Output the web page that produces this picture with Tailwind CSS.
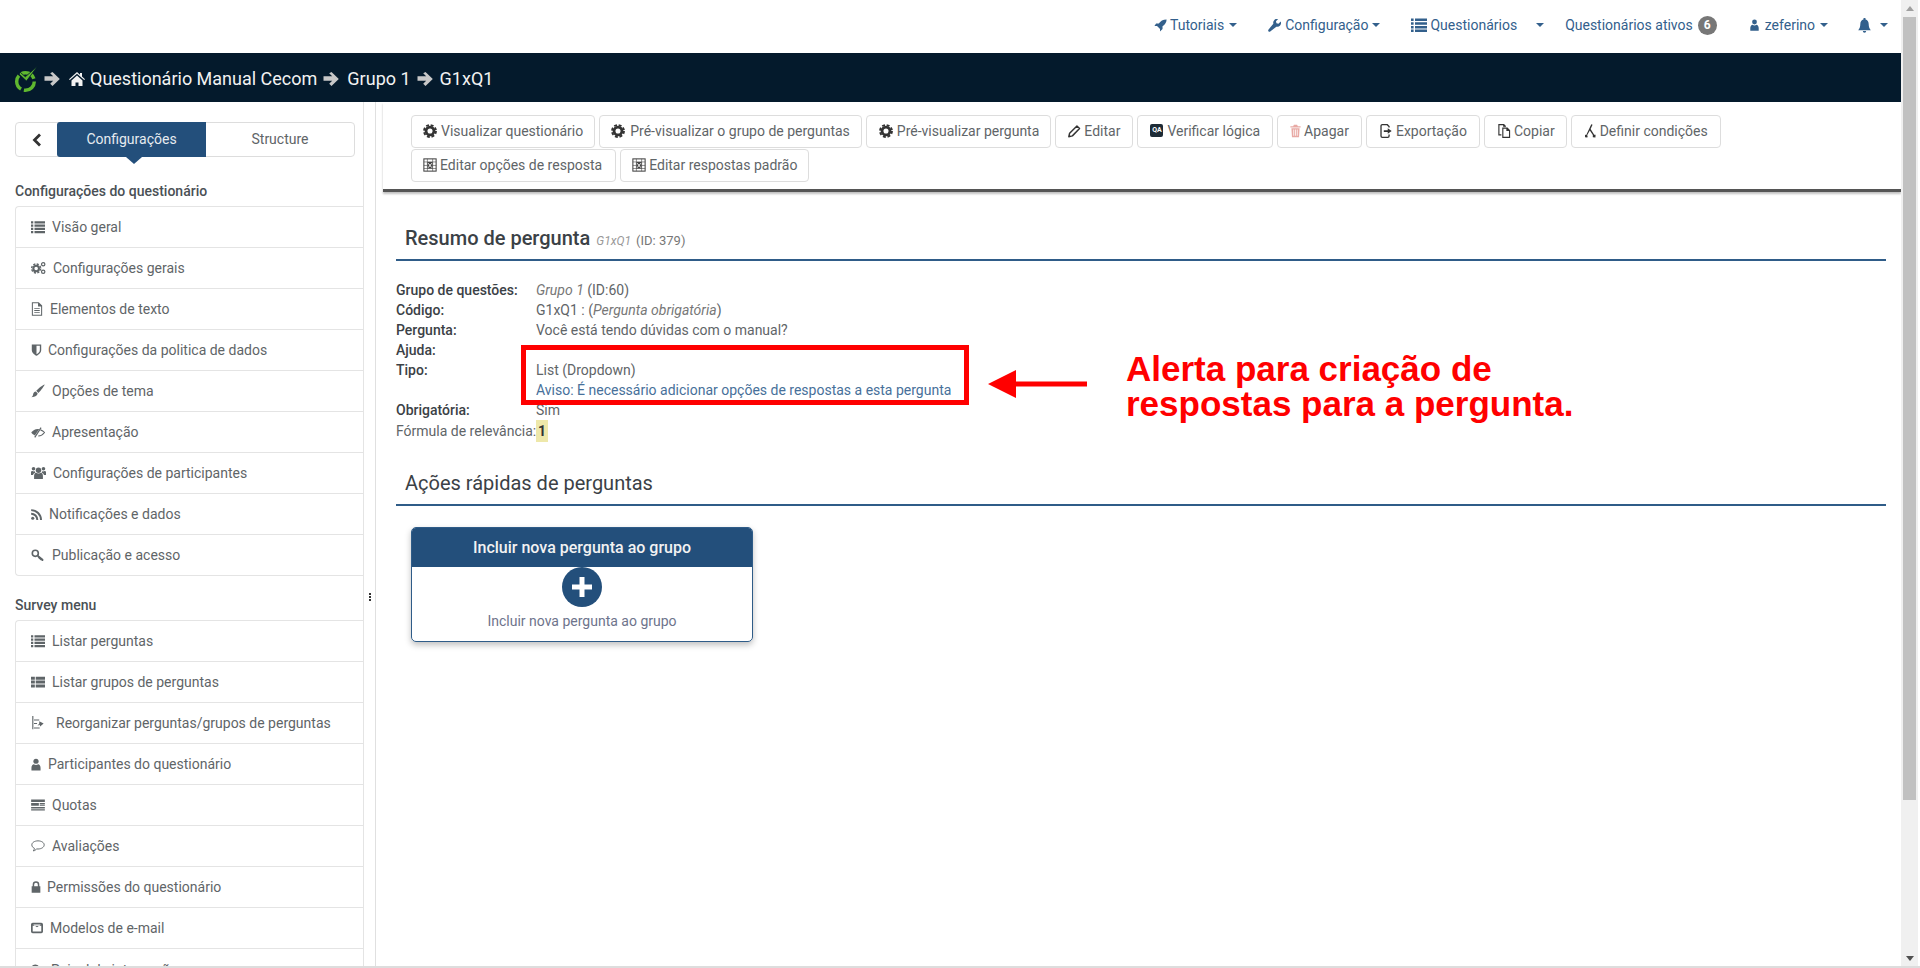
<!DOCTYPE html>
<html lang="pt-BR">
<head>
    <meta charset="UTF-8">
    <title>Resumo de pergunta</title>
    <script src="https://cdn.jsdelivr.net/npm/@tailwindcss/browser@4"></script>
</head>
<body class="bg-white font-['Roboto',sans-serif] text-[14px] leading-[20px] text-[#5f6568]">
    <!-- Icons -->
    <svg class="hidden" xmlns="http://www.w3.org/2000/svg">
        <symbol id="i-rocket" viewBox="0 0 16 16"><path d="M15.500.5c-4.500 0-7.600 2-9.600 5H2.600L.5 8.600h3.200l3.700 3.700v3.200l3.100-3.300v-3.300c3-2 5-5 5-8.400z"/></symbol>
        <symbol id="i-wrench" viewBox="0 0 16 16"><path d="M15.600 3.200l-2.700 2.600-2.500-.6-.6-2.500L12.500.1a4.600 4.600 0 0 0-5.900 5.600L.5 13.300a1.600 1.600 0 0 0 2.200 2.200l7.600-6a4.600 4.600 0 0 0 5.300-6.300z"/></symbol>
        <symbol id="i-list" viewBox="0 0 16 16"><path d="M0 1.500h2.600v2.500H0zM4 1.500h12v2.500H4zM0 5.200h2.600v2.500H0zM4 5.200h12v2.500H4zM0 8.900h2.600v2.500H0zM4 8.900h12v2.500H4zM0 12.600h2.600v2.500H0zM4 12.600h12v2.500H4z"/></symbol>
        <symbol id="i-thlist" viewBox="0 0 16 16"><path d="M0 2h4.400v3.400H0zM5.400 2H16v3.400H5.400zM0 6.400h4.400v3.400H0zM5.400 6.400H16v3.400H5.400zM0 10.800h4.400v3.400H0zM5.400 10.800H16v3.400H5.400z"/></symbol>
        <symbol id="i-user" viewBox="0 0 12 16"><circle cx="6" cy="4" r="3.200"/><path d="M.4 15.500v-3.600c0-2.600 1.600-4.300 2.900-4.300 1.600 1.200 3.800 1.200 5.400 0 1.300 0 2.900 1.700 2.900 4.300v3.600z"/></symbol>
        <symbol id="i-bell" viewBox="0 0 14 16"><path d="M7 0a1.100 1.100 0 0 1 1.100 1.500C10.500 2 11.500 4 11.500 6.500c0 3.500 1 5 2.300 6.500H.2c1.300-1.500 2.300-3 2.300-6.500C2.500 4 3.500 2 5.900 1.500A1.100 1.100 0 0 1 7 0zM5.200 14h3.600a1.800 1.800 0 0 1-3.600 0z"/></symbol>
        <symbol id="i-arrow" viewBox="0 0 16 14"><path d="M8.500 0l7.300 7-7.300 7-2.300-2.300 3-2.900H.5V4.200h8.700l-3-2.900z"/></symbol>
        <symbol id="i-home" viewBox="0 0 16 14"><path d="M8 0l3 2.700V1h2v3.500l3 2.700-.8.900L8 1.800.8 8.100 0 7.200zM2.500 8.500L8 3.600l5.500 4.900V14H9.500v-3.600h-3V14h-4z"/></symbol>
        <symbol id="i-cog" viewBox="0 0 16 16"><circle cx="8" cy="8" r="4.500" fill="none" stroke="currentColor" stroke-width="3.200"/><circle cx="8" cy="8" r="6.800" fill="none" stroke="currentColor" stroke-width="2.200" stroke-dasharray="3.300 2.040"/></symbol>
        <symbol id="i-cogs" viewBox="0 0 16 14"><circle cx="5.500" cy="7.500" r="3" fill="none" stroke="currentColor" stroke-width="2.200"/><circle cx="5.500" cy="7.500" r="4.800" fill="none" stroke="currentColor" stroke-width="1.500" stroke-dasharray="2.300 1.470"/><circle cx="13" cy="3" r="1.800" fill="none" stroke="currentColor" stroke-width="1.300"/><circle cx="13" cy="11" r="1.800" fill="none" stroke="currentColor" stroke-width="1.300"/></symbol>
        <symbol id="i-grid" viewBox="0 0 16 16"><rect x="1" y="1" width="14" height="14" fill="none" stroke="currentColor" stroke-width="1.200"/><path fill="none" stroke="currentColor" stroke-width=".9" opacity=".75" d="M1 4.500h14M5 1v14M11 1v14M1 8.500h4M11 8.500h4M1 12h14"/><rect x="5" y="4.500" width="6" height="7.500" fill="currentColor"/><path fill="none" stroke="#fff" stroke-width="1.100" d="M6 6l4 5M10 6l-4 5"/></symbol>
        <symbol id="i-pencil" viewBox="0 0 16 16"><path fill="none" stroke="currentColor" stroke-width="1.800" stroke-linejoin="round" d="M11 1.800l3.200 3.200-8.800 9-4.400 1 1-4.300z"/></symbol>
        <symbol id="i-trash" viewBox="0 0 14 16"><path d="M5 0h4l1 2h3.500v1.500H.5V2H4zM1.800 4.500h10.400L11.500 16h-9zM4.300 6v8h1V6zm2.200 0v8h1V6zm2.200 0v8h1V6z"/></symbol>
        <symbol id="i-export" viewBox="0 0 16 16"><path fill="none" stroke="currentColor" stroke-width="1.500" d="M11.500 4V3L9.500.8H3.800a1.500 1.500 0 0 0-1.500 1.500v11.400a1.500 1.500 0 0 0 1.500 1.500H10a1.500 1.500 0 0 0 1.500-1.500V12"/><path d="M5.500 7h4.500V4.800L14.500 8 10 11.200V9H5.500z"/></symbol>
        <symbol id="i-copy" viewBox="0 0 16 16"><path fill-rule="evenodd" d="M1.500 0H8l2 2v1.500H8.800V3H7V1.300H2.800v10.400H5V13H1.500zM6 4h6l3 3v9H6zm1.300 1.300v9.400h6.400V8h-3V5.300z"/></symbol>
        <symbol id="i-fork" viewBox="0 0 14 16"><path d="M8.500 0l1.500.8-2.300 5 4.200 6.600 1.600-.1-.2 3.200-3-.2-.1-2 .3-.2-3.700-5.800-3.300 6 .8.300-.4 2-2.700-.2v-3l1.400.3z"/></symbol>
        <symbol id="i-file" viewBox="0 0 14 16"><path fill-rule="evenodd" d="M1 0h8l4 4v12H1zm1.200 1.200v13.600h9.600V5H8.200V1.200zM3.800 7h6.400v1H3.800zm0 2.200h6.400v1H3.800zm0 2.200h6.400v1H3.800z"/></symbol>
        <symbol id="i-shield" viewBox="0 0 12 14"><path fill-rule="evenodd" d="M.5.500h11V7c0 3.500-3 5.500-5.500 6.800C3.500 12.500.5 10.500.5 7zM6 2v10c2-1.100 3.900-2.600 3.900-5V2z"/></symbol>
        <symbol id="i-brush" viewBox="0 0 16 16"><path d="M15.500.5c.5.500-4.500 7.500-7 9.700L6 7.700C8.200 5 15 0 15.500.5zM5.400 8.500l2.200 2.200c-.2 2.400-2.500 4.300-7.100 4.300 1.700-1.200 1.600-2.200 2-3.700.4-1.500 1.500-2.700 2.900-2.800z"/></symbol>
        <symbol id="i-eyeslash" viewBox="0 0 16 12"><path d="M7.800 2C4.600 2 2 3.800.3 6c1 1.400 2.400 2.600 4.100 3.300L9.300 2.200C8.800 2.100 8.300 2 7.800 2z"/><path fill="none" stroke="currentColor" stroke-width="1.200" d="M10.800 3c1.900.6 3.600 1.700 4.700 3-1.500 2-4 3.800-7.200 4"/><path fill="none" stroke="currentColor" stroke-width="1.400" d="M11.500.5L4.300 11.500"/></symbol>
        <symbol id="i-users" viewBox="0 0 16 14"><circle cx="8" cy="4" r="2.900"/><circle cx="2.700" cy="2.500" r="1.900"/><circle cx="13.300" cy="2.500" r="1.900"/><path d="M3.300 13.500V10c0-2 1.200-3.300 2-3.300 1.600 1 3.800 1 5.400 0 .8 0 2 1.300 2 3.300v3.500zM0 9V6.300C0 5.300.7 4.800 1.500 4.800c.8.500 1.600.6 2.500.3.100.7.400 1.300.8 1.700C3.300 7.200 2.400 8 2.200 9zM16 9V6.300c0-1-.7-1.500-1.500-1.500-.8.500-1.600.6-2.500.3-.1.700-.4 1.300-.8 1.700 1.500.4 2.400 1.200 2.600 2.200z"/></symbol>
        <symbol id="i-rss" viewBox="0 0 14 14"><circle cx="2.200" cy="11.800" r="2"/><path d="M.2 4.700v2.500A6.800 6.800 0 0 1 6.800 14h2.500A9.200 9.200 0 0 0 .2 4.700zM.2.200v2.500A11.300 11.300 0 0 1 11.500 14H14A13.800 13.800 0 0 0 .2.200z"/></symbol>
        <symbol id="i-key" viewBox="0 0 16 16"><circle cx="5.300" cy="5.300" r="3.700" fill="none" stroke="currentColor" stroke-width="2"/><path d="M7.500 8.800l1.300-1.300 6.500 5-.3 2.200h-1.600l-1-1.300-1 .3-.3-1.200-1 .1z"/></symbol>
        <symbol id="i-reorg" viewBox="0 0 14 16"><path d="M1 0h1.300v15H1zM3 4h6v1.200H3zM3 8h3.500v1.200H3zM3 13h6.500v1.200H3zM9 6l5 2.500-4 3.500-.5-2-2.500 1 2-2.500z"/></symbol>
        <symbol id="i-quota" viewBox="0 0 16 14"><path d="M0 .5h16v3H0zM0 4.800h9v3H0zM10 4.800h6V6h-6zM0 9.200h16V11H0zM0 12h16v1.500H0zM10 6.800h6V8h-6z"/></symbol>
        <symbol id="i-comment" viewBox="0 0 16 14"><path fill="none" stroke="currentColor" stroke-width="1.100" d="M8 1C4 1 .8 3 .8 5.700c0 1.700 1.200 3.200 3 4 0 1.300-.7 2.400-1.300 3 1.600-.1 3-1.100 3.700-2.300.6.100 1.200.1 1.800.1 4 0 7.200-2.100 7.200-4.800S12 1 8 1z"/></symbol>
        <symbol id="i-lock" viewBox="0 0 12 14"><path fill-rule="evenodd" d="M2 6V4.200a4 4 0 0 1 8 0V6h1.200v8H.8V6zm1.800 0h4.400V4.200a2.200 2.200 0 0 0-4.400 0z"/></symbol>
        <symbol id="i-mail" viewBox="0 0 14 14"><path fill-rule="evenodd" d="M2 1h10a2 2 0 0 1 2 2v8a2 2 0 0 1-2 2H2a2 2 0 0 1-2-2V3a2 2 0 0 1 2-2zm0 3.500V11h10V4.500zM2.500 3L7 6.200 11.500 3z"/></symbol>
        <symbol id="i-plug" viewBox="0 0 14 14"><circle cx="5" cy="5" r="3.500" fill="none" stroke="currentColor" stroke-width="2"/></symbol>
    </svg>

    <div class="relative flex h-[968px] w-[1920px] overflow-hidden border-b-2 border-[#ddd]">
        <div class="flex w-[1901px] flex-col">
            <!-- Top nav -->
            <nav class="flex h-[53px] shrink-0 items-center pb-[3px] pl-[1154px] text-[#33608c]">
                <svg class="h-[13px] w-[13px] fill-current"><use href="#i-rocket"/></svg>
                <span class="ml-[3px]">Tutoriais</span>
                <span class="ml-[5px] h-0 w-0 border-x-[4px] border-t-[4px] border-x-transparent border-t-current"></span>
                <svg class="ml-[31px] h-[13px] w-[13px] fill-current"><use href="#i-wrench"/></svg>
                <span class="ml-[4px]">Configuração</span>
                <span class="ml-[4px] h-0 w-0 border-x-[4px] border-t-[4px] border-x-transparent border-t-current"></span>
                <svg class="ml-[31px] h-[16px] w-[16px] fill-current"><use href="#i-list"/></svg>
                <span class="ml-[3px]">Questionários</span>
                <span class="ml-[19px] h-0 w-0 border-x-[4px] border-t-[4px] border-x-transparent border-t-current"></span>
                <span class="ml-[21px]">Questionários ativos</span>
                <span class="ml-[5px] flex h-[19px] w-[19px] items-center justify-center rounded-full bg-[#777] text-[12px] font-bold text-white">6</span>
                <svg class="ml-[33px] h-[12px] w-[9px] fill-current"><use href="#i-user"/></svg>
                <span class="ml-[6px]">zeferino</span>
                <span class="ml-[5px] h-0 w-0 border-x-[4px] border-t-[4px] border-x-transparent border-t-current"></span>
                <svg class="ml-[30px] h-[15px] w-[13px] fill-current"><use href="#i-bell"/></svg>
                <span class="ml-[9px] h-0 w-0 border-x-[4px] border-t-[4px] border-x-transparent border-t-current"></span>
            </nav>

            <!-- Breadcrumb bar -->
            <header class="flex h-[49px] shrink-0 items-center bg-[#041a2c] pt-[2px] pl-[14px] text-[18px] text-[#f2f2f2]">
                <svg class="h-[26px] w-[24px]" viewBox="0 0 24 26">
                    <circle cx="11.500" cy="15.500" r="8.800" fill="none" stroke="#5fb82f" stroke-width="3.400" stroke-dasharray="15.400 3"/>
                    <path fill="#5fb82f" stroke="#041a2c" stroke-width=".8" d="M6.500 6.500l4.800 4.300L23.500.3 12.500 15 5 8z"/>
                </svg>
                <svg class="ml-[6px] h-[14px] w-[16px] fill-[#c8c8c8]"><use href="#i-arrow"/></svg>
                <svg class="ml-[9px] h-[14px] w-[16px] fill-[#f2f2f2]"><use href="#i-home"/></svg>
                <span class="ml-[5px]">Questionário Manual Cecom</span>
                <svg class="ml-[6px] h-[14px] w-[16px] fill-[#c8c8c8]"><use href="#i-arrow"/></svg>
                <span class="ml-[8px]">Grupo 1</span>
                <svg class="ml-[6px] h-[14px] w-[16px] fill-[#c8c8c8]"><use href="#i-arrow"/></svg>
                <span class="ml-[7px]">G1xQ1</span>
            </header>

            <div class="flex min-h-0 flex-1">
                <!-- Sidebar -->
                <aside class="w-[364px] shrink-0 border-r border-[#e4e4e4] pl-[15px]">
                    <div class="mt-[20px] flex h-[35px] w-[340px] items-stretch rounded-[4px] border border-[#ddd]">
                        <div class="flex w-[41px] items-center justify-center text-[#333]">
                            <svg class="h-[14px] w-[10px]" viewBox="0 0 10 14"><path fill="none" stroke="currentColor" stroke-width="2.800" d="M8 1.500L2.500 7 8 12.500"/></svg>
                        </div>
                        <div class="relative -my-px flex w-[149px] items-center justify-center rounded-l-[3px] bg-[#234f7b] pb-[2px] text-[#e6ebf0]">
                            Configurações
                            <span class="absolute top-full left-[69px] h-0 w-0 border-x-[8px] border-t-[7px] border-x-transparent border-t-[#234f7b]"></span>
                        </div>
                        <div class="flex flex-1 items-center justify-center pb-[2px]">Structure</div>
                    </div>
                    <h2 class="mt-[24px] font-medium text-[#4a5055]">Configurações do questionário</h2>
                    <ul class="mt-[5px] w-[348px] rounded-l-[4px] border border-r-0 border-[#e4e4e4]">
                        <li class="flex h-[41px] items-center border-b border-[#e4e4e4] pl-[15px]"><span class="w-[21px] shrink-0"><svg class="h-[14px] w-[14px] fill-current"><use href="#i-list"/></svg></span>Visão geral</li>
                        <li class="flex h-[41px] items-center border-b border-[#e4e4e4] pl-[15px]"><span class="w-[22px] shrink-0"><svg class="h-[14px] w-[15px] fill-current"><use href="#i-cogs"/></svg></span>Configurações gerais</li>
                        <li class="flex h-[41px] items-center border-b border-[#e4e4e4] pl-[15px]"><span class="w-[19px] shrink-0"><svg class="h-[14px] w-[12px] fill-current"><use href="#i-file"/></svg></span>Elementos de texto</li>
                        <li class="flex h-[41px] items-center border-b border-[#e4e4e4] pl-[15px]"><span class="w-[17px] shrink-0"><svg class="h-[12px] w-[11px] fill-current"><use href="#i-shield"/></svg></span>Configurações da politica de dados</li>
                        <li class="flex h-[41px] items-center border-b border-[#e4e4e4] pl-[15px]"><span class="w-[21px] shrink-0"><svg class="h-[14px] w-[14px] fill-current"><use href="#i-brush"/></svg></span>Opções de tema</li>
                        <li class="flex h-[41px] items-center border-b border-[#e4e4e4] pl-[15px]"><span class="w-[21px] shrink-0"><svg class="h-[11px] w-[14px] fill-current"><use href="#i-eyeslash"/></svg></span>Apresentação</li>
                        <li class="flex h-[41px] items-center border-b border-[#e4e4e4] pl-[15px]"><span class="w-[22px] shrink-0"><svg class="h-[14px] w-[15px] fill-current"><use href="#i-users"/></svg></span>Configurações de participantes</li>
                        <li class="flex h-[41px] items-center border-b border-[#e4e4e4] pl-[15px]"><span class="w-[18px] shrink-0"><svg class="h-[11px] w-[11px] fill-current"><use href="#i-rss"/></svg></span>Notificações e dados</li>
                        <li class="flex h-[40px] items-center pl-[15px]"><span class="w-[21px] shrink-0"><svg class="h-[13px] w-[13px] fill-current"><use href="#i-key"/></svg></span>Publicação e acesso</li>
                    </ul>
                    <h2 class="mt-[19px] font-medium text-[#4a5055]">Survey menu</h2>
                    <ul class="mt-[5px] w-[348px] rounded-l-[4px] border border-r-0 border-[#e4e4e4]">
                        <li class="flex h-[41px] items-center border-b border-[#e4e4e4] pl-[15px]"><span class="w-[21px] shrink-0"><svg class="h-[14px] w-[14px] fill-current"><use href="#i-list"/></svg></span>Listar perguntas</li>
                        <li class="flex h-[41px] items-center border-b border-[#e4e4e4] pl-[15px]"><span class="w-[21px] shrink-0"><svg class="h-[14px] w-[14px] fill-current"><use href="#i-thlist"/></svg></span>Listar grupos de perguntas</li>
                        <li class="flex h-[41px] items-center border-b border-[#e4e4e4] pl-[15px]"><span class="w-[25px] shrink-0"><svg class="h-[14px] w-[13px] fill-current"><use href="#i-reorg"/></svg></span>Reorganizar perguntas/grupos de perguntas</li>
                        <li class="flex h-[41px] items-center border-b border-[#e4e4e4] pl-[15px]"><span class="w-[17px] shrink-0"><svg class="h-[13px] w-[10px] fill-current"><use href="#i-user"/></svg></span>Participantes do questionário</li>
                        <li class="flex h-[41px] items-center border-b border-[#e4e4e4] pl-[15px]"><span class="w-[21px] shrink-0"><svg class="h-[12px] w-[14px] fill-current"><use href="#i-quota"/></svg></span>Quotas</li>
                        <li class="flex h-[41px] items-center border-b border-[#e4e4e4] pl-[15px]"><span class="w-[21px] shrink-0"><svg class="h-[12px] w-[14px] fill-current"><use href="#i-comment"/></svg></span>Avaliações</li>
                        <li class="flex h-[41px] items-center border-b border-[#e4e4e4] pl-[15px]"><span class="w-[16px] shrink-0"><svg class="h-[12px] w-[10px] fill-current"><use href="#i-lock"/></svg></span>Permissões do questionário</li>
                        <li class="flex h-[41px] items-center border-b border-[#e4e4e4] pl-[15px]"><span class="w-[19px] shrink-0"><svg class="h-[12px] w-[12px] fill-current"><use href="#i-mail"/></svg></span>Modelos de e-mail</li>
                        <li class="flex h-[41px] items-center pl-[15px]"><span class="w-[20px] shrink-0"><svg class="h-[12px] w-[12px] fill-current"><use href="#i-plug"/></svg></span>Painel de integração</li>
                    </ul>
                </aside>

                <!-- Resize handle -->
                <div class="flex w-[12px] shrink-0 flex-col items-center border-r border-[#e0e0e0] pt-[491px]">
                    <span class="h-[2px] w-[2px] bg-[#333]"></span>
                    <span class="mt-[1px] h-[2px] w-[2px] bg-[#333]"></span>
                    <span class="mt-[1px] h-[2px] w-[2px] bg-[#333]"></span>
                </div>

                <!-- Main content -->
                <main class="min-w-0 flex-1">
                    <div class="ml-[7px] h-[90px] border-b-[3px] border-[#555] pt-[13px] pl-[28px] shadow-[0_2px_2px_rgba(0,0,0,0.25)]">
                        <div class="flex w-[1400px] flex-wrap gap-x-[4px] gap-y-px">
                            <button class="flex h-[33px] items-center rounded-[4px] border border-[#ddd] px-[11px] pb-[2px] text-[#5f6568]"><svg class="mr-[4px] h-[14px] w-[14px] text-[#333]"><use href="#i-cog"/></svg>Visualizar questionário</button>
                            <button class="flex h-[33px] items-center rounded-[4px] border border-[#ddd] px-[11px] pb-[2px] text-[#5f6568]"><svg class="mr-[5px] h-[14px] w-[14px] text-[#333]"><use href="#i-cog"/></svg>Pré-visualizar o grupo de perguntas</button>
                            <button class="flex h-[33px] items-center rounded-[4px] border border-[#ddd] pr-[11px] pb-[2px] pl-[12px] text-[#5f6568]"><svg class="mr-[4px] h-[14px] w-[14px] text-[#333]"><use href="#i-cog"/></svg>Pré-visualizar pergunta</button>
                            <button class="flex h-[33px] items-center rounded-[4px] border border-[#ddd] px-[12px] pb-[2px] text-[#5f6568]"><svg class="mr-[3px] h-[14px] w-[13px] text-[#333]"><use href="#i-pencil"/></svg>Editar</button>
                            <button class="flex h-[33px] items-center rounded-[4px] border border-[#ddd] px-[12px] pb-[2px] text-[#5f6568]"><span class="mr-[4px] flex h-[13px] w-[13px] items-center justify-center rounded-[2px] bg-[#1d2b36] text-[7px] leading-none font-bold text-white">QA</span>Verificar lógica</button>
                            <button class="flex h-[33px] items-center rounded-[4px] border border-[#ddd] px-[12px] pb-[2px] text-[#5f6568]"><svg class="mr-[3px] h-[14px] w-[11px] fill-[#e8a9a4]"><use href="#i-trash"/></svg>Apagar</button>
                            <button class="flex h-[33px] items-center rounded-[4px] border border-[#ddd] px-[12px] pb-[2px] text-[#5f6568]"><svg class="mr-[3px] h-[14px] w-[14px] fill-[#333] text-[#333]"><use href="#i-export"/></svg>Exportação</button>
                            <button class="flex h-[33px] items-center rounded-[4px] border border-[#ddd] pr-[11px] pb-[2px] pl-[12px] text-[#5f6568]"><svg class="mr-[3px] h-[14px] w-[14px] fill-[#333]"><use href="#i-copy"/></svg>Copiar</button>
                            <button class="flex h-[33px] items-center rounded-[4px] border border-[#ddd] px-[12px] pb-[2px] text-[#5f6568]"><svg class="mr-[4px] h-[14px] w-[12px] fill-[#333]"><use href="#i-fork"/></svg>Definir condições</button>
                            <button class="flex h-[33px] items-center rounded-[4px] border border-[#ddd] pr-[13px] pb-[2px] pl-[11px] text-[#5f6568]"><svg class="mr-[3px] h-[14px] w-[14px] text-[#444]"><use href="#i-grid"/></svg>Editar opções de resposta</button>
                            <button class="flex h-[33px] items-center rounded-[4px] border border-[#ddd] px-[11px] pb-[2px] text-[#5f6568]"><svg class="mr-[3px] h-[14px] w-[14px] text-[#444]"><use href="#i-grid"/></svg>Editar respostas padrão</button>
                        </div>
                    </div>

                    <section class="mr-[15px] ml-[20px]">
                        <div class="mt-[27px] flex h-[42px] items-baseline border-b-2 border-[#2f5c88] pt-[5px] pl-[9px]">
                            <h1 class="text-[20px] leading-[28px] font-medium text-[#3b4146]">Resumo de pergunta</h1>
                            <em class="ml-[6px] text-[12px] text-[#999]">G1xQ1</em>
                            <span class="ml-[5px] text-[13px] text-[#777]">(ID: 379)</span>
                        </div>
                        <dl class="mt-[19px] grid grid-cols-[140px_1fr] justify-items-start text-[14px] text-[#5f6568]">
                            <dt class="font-medium text-[#3b4146]">Grupo de questões:</dt>
                            <dd><em class="text-[#777]">Grupo 1</em> (ID:60)</dd>
                            <dt class="font-medium text-[#3b4146]">Código:</dt>
                            <dd>G1xQ1 : (<em class="text-[#777]">Pergunta obrigatória</em>)</dd>
                            <dt class="font-medium text-[#3b4146]">Pergunta:</dt>
                            <dd>Você está tendo dúvidas com o manual?</dd>
                            <dt class="font-medium text-[#3b4146]">Ajuda:</dt>
                            <dd></dd>
                            <dt class="font-medium text-[#3b4146]">Tipo:</dt>
                            <dd>List (Dropdown)</dd>
                            <dt></dt>
                            <dd class="text-[#47709a]">Aviso: É necessário adicionar opções de respostas a esta pergunta</dd>
                            <dt class="font-medium text-[#3b4146]">Obrigatória:</dt>
                            <dd>Sim</dd>
                            <dt class="leading-[22px] whitespace-nowrap">Fórmula de relevância:</dt>
                            <dd class="h-[22px]"><span class="inline-block h-[22px] bg-[#eee8aa] px-[2px] align-top leading-[22px] font-bold text-[#333]">1</span></dd>
                        </dl>
                        <div class="mt-[21px] flex h-[43px] items-center border-b-2 border-[#2f5c88] pb-[2px] pl-[9px]">
                            <h1 class="text-[20px] text-[#3b4146]">Ações rápidas de perguntas</h1>
                        </div>
                        <!-- Quick action card -->
                        <div class="mt-[21px] ml-[15px] h-[115px] w-[342px] overflow-hidden rounded-[5px] border border-[#2f5c88] text-center shadow-[0_3px_6px_rgba(0,0,0,0.25)]">
                            <div class="flex h-[39px] items-center justify-center bg-[#234f7b] text-[16px] font-medium text-[#f2f2f2]">Incluir nova pergunta ao grupo</div>
                            <div class="flex flex-col items-center">
                                <span class="flex h-[40px] w-[40px] items-center justify-center rounded-full bg-[#234f7b]">
                                    <svg class="h-[20px] w-[20px]" viewBox="0 0 20 20"><path fill="#fff" d="M7.500 0h5v7.500H20v5h-7.500V20h-5v-7.500H0v-5h7.500z"/></svg>
                                </span>
                                <span class="mt-[4px] text-[#6e748c]">Incluir nova pergunta ao grupo</span>
                            </div>
                        </div>
                    </section>
                </main>
            </div>
        </div>

        <!-- Scrollbar -->
        <div class="flex w-[19px] shrink-0 flex-col items-start">
            <div class="flex h-full w-[17px] flex-col bg-[#f0f0f0] pl-[2px]">
                <div class="flex h-[17px] w-[13px] items-center justify-center"><span class="h-0 w-0 border-x-[4px] border-b-[5px] border-x-transparent border-b-[#a0a0a0]"></span></div>
                <div class="h-[783px] w-[13px] bg-[#c1c1c1]"></div>
                <div class="mt-[153px] flex h-[10px] w-[13px] items-center justify-center"><span class="h-0 w-0 border-x-[4px] border-t-[5px] border-x-transparent border-t-[#505050]"></span></div>
            </div>
        </div>

        <!-- Annotation drawn over the screenshot -->
        <div class="absolute top-[345px] left-[521px] h-[60px] w-[448px] border-[5px] border-[#f00]"></div>
        <svg class="absolute top-[369px] left-[988px] h-[30px] w-[99px]" viewBox="0 0 99 30"><path fill="#f00" d="M0 15L28 1v11.500h71v5H28V29z"/></svg>
        <p class="absolute top-[351px] left-[1126px] font-['Liberation_Sans',Arial,sans-serif] text-[35px] leading-[35px] font-bold text-[#f00]">Alerta para criação de<br>respostas para a pergunta.</p>
    </div>
</body>
</html>
